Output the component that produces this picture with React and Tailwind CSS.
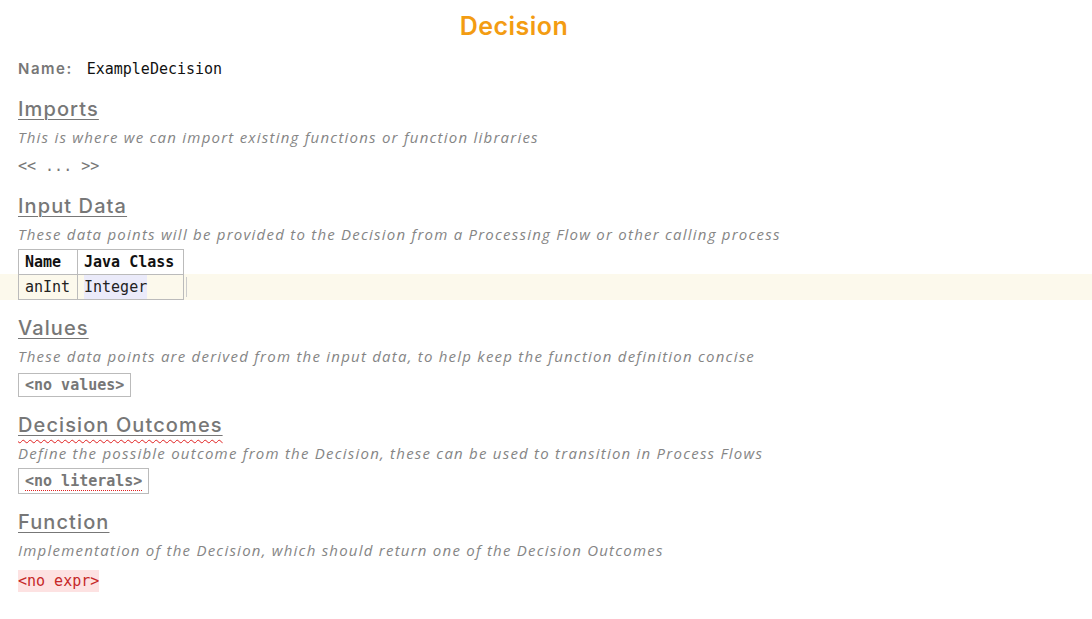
const sans = "font-['Inter','Noto_Sans',sans-serif]";
const mono = "font-['DejaVu_Sans_Mono','Liberation_Mono',monospace]";

function Heading({ children, wavy }) {
  if (wavy) {
    return (
      <h2 className={`${sans} h-[28px] text-[20px] font-medium leading-[28px] tracking-[0.055em] text-[#777]`}>
        <span className="underline decoration-wavy decoration-[#e02020] decoration-1 underline-offset-[7px]">
          <span className="underline decoration-[#777] decoration-1 underline-offset-[3px]">{children}</span>
        </span>
      </h2>
    );
  }
  return (
    <h2 className={`${sans} h-[28px] text-[20px] font-medium leading-[28px] tracking-[0.055em] text-[#777] underline decoration-1 underline-offset-[3px]`}>
      {children}
    </h2>
  );
}

function Desc({ children }) {
  return (
    <p className="font-['Open_Sans',sans-serif] h-[28px] whitespace-nowrap text-[15px] italic leading-[28px] tracking-[0.082em] text-[#858585]">
      {children}
    </p>
  );
}

function Section({ title, desc, wavy, children, gap }) {
  return (
    <section className="flex flex-col px-[18px]">
      <Heading wavy={wavy}>{title}</Heading>
      <Desc>{desc}</Desc>
      <div className={gap}>{children}</div>
    </section>
  );
}

export default function App() {
  return (
    <div className="min-h-screen w-full bg-white pt-[10px] pb-8">
      <h1 className={`${sans} h-[32px] pr-[64px] text-center text-[25px] font-semibold leading-[32px] tracking-[0.02em] text-[#f39c12]`}>
        Decision
      </h1>

      <div className="mt-[16px] flex h-[22px] items-center px-[18px] leading-[22px]">
        <span className={`${sans} text-[15px] font-semibold tracking-[0.1em] text-[#777]`}>Name:</span>
        <span className={`${mono} ml-[14px] text-[15px] text-[#111]`}>ExampleDecision</span>
      </div>

      <div className="mt-[15px] flex flex-col">
        <Section gap="mt-[3px]" title="Imports" desc="This is where we can import existing functions or function libraries">
          <div className={`${mono} h-[24px] text-[15px] leading-[24px] text-[#777]`}>{'<< ... >>'}</div>
        </Section>

        <div className="mt-[14px]">
          <div className="px-[18px]">
            <Heading>Input Data</Heading>
            <Desc>These data points will be provided to the Decision from a Processing Flow or other calling process</Desc>
          </div>
          <div className={`${mono} mt-[1px] text-[15px] leading-[24px]`}>
            <div className="flex px-[18px]">
              <div className="flex border border-b-0 border-[#bbb]">
                <div className="w-[59px] border-r border-[#bbb] px-[6px] font-bold text-[#111]">Name</div>
                <div className="w-[105px] px-[6px] font-bold text-[#111]">Java Class</div>
              </div>
            </div>
            <div className="flex items-center bg-[#fcf9ec] px-[18px]">
              <div className="flex border border-[#bbb]">
                <div className="w-[59px] border-r border-[#bbb] px-[6px] text-[#222]">anInt</div>
                <div className="w-[105px] px-[6px] text-[#222]">
                  <span className="inline-block bg-[#ebebfa]">Integer</span>
                </div>
              </div>
              <div className="ml-[2px] h-[20px] w-px bg-[#ccc]" />
            </div>
          </div>
        </div>

        <div className="mt-[14px]">
          <Section gap="mt-[2px]" title="Values" desc="These data points are derived from the input data, to help keep the function definition concise">
            <div className={`${mono} inline-block h-[24px] border border-[#bbb] px-[6px] text-[15px] font-bold leading-[22px] text-[#777]`}>
              {'<no values>'}
            </div>
          </Section>
        </div>

        <div className="mt-[14px]">
          <Section gap="mt-[1px]" wavy title="Decision Outcomes" desc="Define the possible outcome from the Decision, these can be used to transition in Process Flows">
            <div className={`${mono} inline-block h-[26px] border border-[#bbb] px-[6px] text-[15px] font-bold leading-[24px] text-[#777]`}>
              <span className="underline decoration-dotted decoration-[#e02020] decoration-1 underline-offset-[4px]">{'<no literals>'}</span>
            </div>
          </Section>
        </div>

        <div className="mt-[14px]">
          <Section gap="mt-[4px]" title="Function" desc="Implementation of the Decision, which should return one of the Decision Outcomes">
            <div className={`${mono} inline-block h-[22px] bg-[#fde2e2] text-[15px] leading-[22px] text-[#c62828]`}>
              {'<no expr>'}
            </div>
          </Section>
        </div>
      </div>
    </div>
  );
}
